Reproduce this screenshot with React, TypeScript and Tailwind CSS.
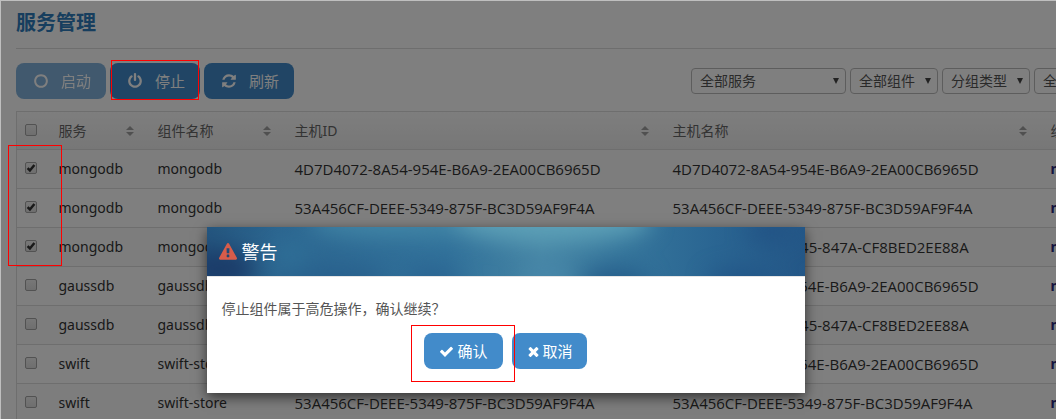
import React from "react";

const ICONS = {
  circle:
    "M896 352q-148 0-273 73t-198 198-73 273 73 273 198 198 273 73 273-73 198-198 73-273-73-273-198-198-273-73zm768 544q0 209-103 385.5t-279.5 279.5-385.5 103-385.5-103-279.5-279.5-103-385.5 103-385.5 279.5-279.5 385.5-103 385.5 103 279.5 279.5 103 385.5z",
  power:
    "M1664 896q0 156-61 298t-164 245-245 164-298 61-298-61-245-164-164-245-61-298q0-182 80.5-343t226.5-270q43-32 95.5-25t83.5 50q32 42 24.5 94.5t-49.5 84.5q-98 74-151.5 181t-53.5 228q0 104 40.5 198.5t109.5 163.5 163.5 109.5 198.5 40.5 198.5-40.5 163.5-109.5 109.5-163.5 40.5-198.5q0-121-53.5-228t-151.5-181q-42-32-49.5-84.5t24.5-94.5q31-43 84-50t95 25q146 109 226.5 270t80.5 343zm-640-768v640q0 52-38 90t-90 38-90-38-38-90v-640q0-52 38-90t90-38 90 38 38 90z",
  refresh:
    "M1639 1056q0 5-1 7-64 268-268 434.5t-478 166.5q-146 0-282.5-55t-243.5-157l-129 129q-19 19-45 19t-45-19-19-45v-448q0-26 19-45t45-19h448q26 0 45 19t19 45-19 45l-137 137q71 66 161 102t187 36q134 0 250-65t186-179q11-17 53-117 8-23 30-23h192q13 0 22.5 9.5t9.5 22.5zm25-800v448q0 26-19 45t-45 19h-448q-26 0-45-19t-19-45 19-45l138-138q-148-137-349-137-134 0-250 65t-186 179q-11 17-53 117-8 23-30 23h-199q-13 0-22.5-9.5t-9.5-22.5v-7q65-268 270-434.5t480-166.5q146 0 284 55.5t245 156.5l130-129q19-19 45-19t45 19 19 45z",
  check:
    "M1671 566q0 40-28 68l-724 724-136 136q-28 28-68 28t-68-28l-136-136-362-362q-28-28-28-68t28-68l136-136q28-28 68-28t68 28l294 295 656-657q28-28 68-28t68 28l136 136q28 28 28 68z",
  times:
    "M1490 1322q0 40-28 68l-136 136q-28 28-68 28t-68-28l-294-294-294 294q-28 28-68 28t-68-28l-136-136q-28-28-28-68t28-68l294-294-294-294q-28-28-28-68t28-68l136-136q28-28 68-28t68 28l294 294 294-294q28-28 68-28t68 28l136 136q28 28 28 68t-28 68l-294 294 294 294q28 28 28 68z",
  warning:
    "M1024 1375v-190q0-14-9.5-23.5t-22.5-9.5h-192q-13 0-22.5 9.5t-9.5 23.5v190q0 14 9.5 23.5t22.5 9.5h192q13 0 22.5-9.5t9.5-23.5zm-2-374l18-459q0-12-10-19-13-11-24-11h-220q-11 0-24 11-10 7-10 21l17 457q0 10 10 16.5t24 6.5h185q14 0 23.5-6.5t10.5-16.5zm-14-934l768 1408q35 63-2 126-17 29-46.5 46t-63.5 17h-1536q-34 0-63.5-17t-46.5-46q-37-63-2-126l768-1408q17-31 47-49t65-18 65 18 47 49z",
};

function Icon({ name, className }: { name: keyof typeof ICONS; className: string }) {
  return (
    <svg viewBox="0 0 1792 1792" fill="currentColor" aria-hidden="true" className={className}>
      <path d={ICONS[name]} />
    </svg>
  );
}

function Highlight({ className }: { className: string }) {
  return <span aria-hidden="true" className={`pointer-events-none absolute z-20 border border-[#ff0000] ${className}`} />;
}

function ToolButton({ icon, label, disabled }: { icon: keyof typeof ICONS; label: string; disabled?: boolean }) {
  return (
    <button
      type="button"
      disabled={disabled}
      className="flex h-9 w-[90px] items-center justify-center gap-3 rounded-lg bg-[#428bca] pl-0.5 text-[15px] text-white disabled:opacity-65"
    >
      <Icon name={icon} className="size-4" />
      {label}
    </button>
  );
}

function Filter({ label, wide }: { label: string; wide?: boolean }) {
  return (
    <div className={`grid items-center ${wide ? "w-[155px]" : "w-[88px]"}`}>
      <select
        aria-label={label}
        className="col-start-1 row-start-1 h-[26px] w-full appearance-none rounded border border-[#bbbbbb] bg-transparent pl-2 text-[14px] leading-5 text-[#555555]"
      >
        <option>{label}</option>
      </select>
      <svg viewBox="0 0 6 6" aria-hidden="true" className="pointer-events-none col-start-1 row-start-1 mr-[7px] size-1.5 justify-self-end fill-[#444444]">
        <path d="M0 0h6L3 6z" />
      </svg>
    </div>
  );
}

function Tick({ label, checked }: { label: string; checked?: boolean }) {
  return (
    <span className="mb-0.5 grid size-3 place-items-center">
      <input
        type="checkbox"
        aria-label={label}
        defaultChecked={checked}
        className="peer col-start-1 row-start-1 size-3 appearance-none rounded-[2px] border border-[#a4a4a4] bg-linear-to-b from-[#f0f0f0] to-[#dddddd]"
      />
      <svg viewBox="0 0 12 12" aria-hidden="true" className="pointer-events-none invisible col-start-1 row-start-1 size-3 peer-checked:visible">
        <path d="M2.6 6.2 4.9 8.5 9.4 3" fill="none" stroke="#333333" strokeWidth="2.5" />
      </svg>
    </span>
  );
}

function HeaderCell({ label }: { label: string }) {
  return (
    <th scope="col" className="pr-4 pl-2 text-left font-normal">
      <span className="flex items-center justify-between whitespace-nowrap">
        {label}
        <svg viewBox="0 0 8 10" aria-hidden="true" className="h-2.5 w-2 fill-[#a0a0a0]">
          <path d="M0 4 4 0l4 4zM0 6h8l-4 4z" />
        </svg>
      </span>
    </th>
  );
}

const HOST_A = "4D7D4072-8A54-954E-B6A9-2EA00CB6965D";
const HOST_B = "53A456CF-DEEE-5349-875F-BC3D59AF9F4A";
const HOST_C = "9F2E6138-17E3-5F45-847A-CF8BED2EE88A";

const ROWS = [
  { service: "mongodb", component: "mongodb", host: HOST_A, checked: true },
  { service: "mongodb", component: "mongodb", host: HOST_B, checked: true },
  { service: "mongodb", component: "mongodb", host: HOST_C, checked: true },
  { service: "gaussdb", component: "gaussdb", host: HOST_A, checked: false },
  { service: "gaussdb", component: "gaussdb", host: HOST_C, checked: false },
  { service: "swift", component: "swift-store", host: HOST_A, checked: false },
  { service: "swift", component: "swift-store", host: HOST_B, checked: false },
];

function ServiceTable() {
  return (
    <div className="relative">
      <table className="w-full table-fixed border-collapse border border-[#dddddd] text-[14px] leading-5 text-[#333333]">
        <colgroup>
          <col className="w-[34px]" />
          <col className="w-[99px]" />
          <col className="w-[137px]" />
          <col className="w-[378px]" />
          <col className="w-[378px]" />
          <col />
        </colgroup>
        <thead>
          <tr className="h-[38px] bg-linear-to-b from-[#fcfcfc] to-[#eeeeee] text-[#666666]">
            <th scope="col" className="pl-2">
              <Tick label="全选" />
            </th>
            <HeaderCell label="服务" />
            <HeaderCell label="组件名称" />
            <HeaderCell label="主机ID" />
            <HeaderCell label="主机名称" />
            <HeaderCell label="组件状态" />
          </tr>
        </thead>
        <tbody>
          {ROWS.map((row, i) => (
            <tr key={i} className="h-[39px] border-t border-[#dddddd] odd:bg-[#fafafa]">
              <td className="pl-2">
                <Tick label={`选择 ${row.service}`} checked={row.checked} />
              </td>
              <td className="pl-2">{row.service}</td>
              <td className="pl-2">{row.component}</td>
              <td className="pl-2 font-['Open_Sans',sans-serif] text-[15px] leading-5 whitespace-nowrap">{row.host}</td>
              <td className="pl-2 font-['Open_Sans',sans-serif] text-[15px] leading-5 whitespace-nowrap">{row.host}</td>
              <td className="pl-2 font-bold text-[#2a2a80]">normal</td>
            </tr>
          ))}
        </tbody>
      </table>
      <Highlight className="top-[34px] -left-2 h-[121px] w-[54px]" />
    </div>
  );
}

function HeaderTexture() {
  return (
    <svg viewBox="0 0 598 49" preserveAspectRatio="none" aria-hidden="true" className="absolute inset-0 size-full">
      <defs>
        <linearGradient id="base">
          <stop offset="0" stopColor="#24567f" />
          <stop offset="0.12" stopColor="#2c6690" />
          <stop offset="0.4" stopColor="#31719a" />
          <stop offset="0.56" stopColor="#4584a4" />
          <stop offset="0.7" stopColor="#35759b" />
          <stop offset="0.85" stopColor="#2a6592" />
          <stop offset="1" stopColor="#245787" />
        </linearGradient>
        <filter id="soft" filterUnits="userSpaceOnUse" colorInterpolationFilters="sRGB" x="-60" y="-60" width="718" height="169">
          <feGaussianBlur stdDeviation="11" />
        </filter>
      </defs>
      <rect width="598" height="49" fill="url(#base)" />
      <g filter="url(#soft)">
        <ellipse cx="12" cy="42" rx="36" ry="20" fill="#1b3c69" />
        <ellipse cx="85" cy="28" rx="18" ry="14" fill="#2f6f97" />
        <ellipse cx="190" cy="-4" rx="90" ry="14" fill="#4286a6" />
        <ellipse cx="130" cy="52" rx="50" ry="12" fill="#285f8c" />
        <ellipse cx="225" cy="52" rx="28" ry="12" fill="#2a6391" />
        <ellipse cx="345" cy="-6" rx="100" ry="22" fill="#5c9fb6" />
        <ellipse cx="340" cy="50" rx="24" ry="18" fill="#4786a8" />
        <ellipse cx="408" cy="56" rx="34" ry="16" fill="#265e8b" />
        <ellipse cx="565" cy="4" rx="24" ry="12" fill="#225385" />
        <ellipse cx="535" cy="54" rx="34" ry="12" fill="#225587" />
      </g>
    </svg>
  );
}

function WarningDialog() {
  return (
    <div role="dialog" aria-modal="true" aria-labelledby="dialog-title" className="w-[598px] bg-white shadow-[0_4px_12px_rgba(0,0,0,0.6)]">
      <header className="relative flex h-[50px] items-center border-b border-[#e5e5e5] pl-3">
        <HeaderTexture />
        <Icon name="warning" className="relative mr-[5px] size-[18px] text-[#d75c4a]" />
        <h2 id="dialog-title" className="relative text-[18px] leading-6 text-white">
          警告
        </h2>
      </header>
      <div className="px-[15px] pt-5 pb-6">
        <p className="text-[14px] leading-6 text-[#555555]">停止组件属于高危操作，确认继续？</p>
        <div className="mt-3 flex justify-center gap-[9px]">
          <div className="relative">
            <button type="button" className="flex h-9 w-[79px] items-center justify-center gap-[3px] rounded-lg bg-[#428bca] text-[15px] text-white">
              <Icon name="check" className="size-[15px]" />
              确认
            </button>
            <Highlight className="-top-2 -right-3 -bottom-[13px] -left-[13px]" />
          </div>
          <button type="button" className="flex h-9 w-[75px] items-center justify-center gap-px rounded-lg bg-[#428bca] text-[15px] text-white">
            <Icon name="times" className="size-[15px]" />
            取消
          </button>
        </div>
      </div>
    </div>
  );
}

export default function App() {
  return (
    <div className="relative h-screen overflow-hidden border-t border-l border-[#bfbfbf] bg-white font-['Noto_Sans','Noto_Sans_CJK_SC',sans-serif]">
      <main className="min-w-[1121px] pl-[15px]">
        <h1 className="border-b border-[#dddddd] pt-2 pb-[11px] text-[20px] leading-7 font-bold text-[#2f7dbd]">服务管理</h1>
        <div className="mt-[14px] mb-3 flex items-center justify-between">
          <div className="flex gap-1">
            <ToolButton icon="circle" label="启动" disabled />
            <div className="relative">
              <ToolButton icon="power" label="停止" />
              <Highlight className="-top-[3px] right-px -bottom-px left-px" />
            </div>
            <ToolButton icon="refresh" label="刷新" />
          </div>
          <div className="flex gap-1">
            <Filter label="全部服务" wide />
            <Filter label="全部组件" />
            <Filter label="分组类型" />
            <Filter label="全部状态" />
          </div>
        </div>
        <ServiceTable />
      </main>
      <div className="absolute inset-0 z-10 flex items-start justify-center bg-black/50 pt-[226px] pr-[46px]">
        <WarningDialog />
      </div>
    </div>
  );
}
